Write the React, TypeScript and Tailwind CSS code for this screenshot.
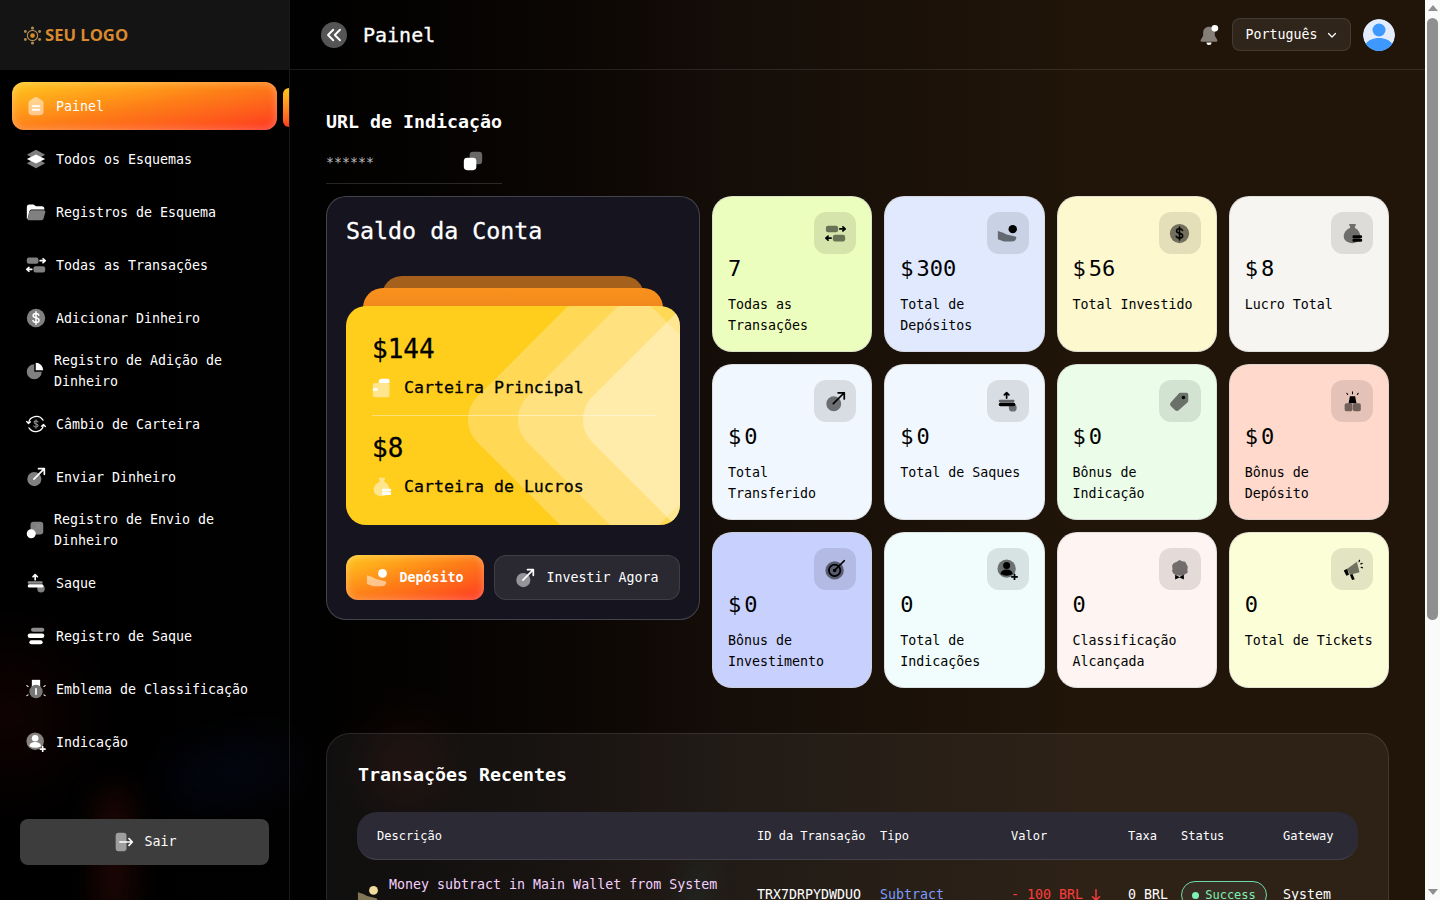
import React from 'react';

type IconProps = { className?: string };

const Svg: React.FC<React.PropsWithChildren<IconProps>> = ({ className, children }) => (
  <svg viewBox="0 0 24 24" fill="currentColor" className={className}>
    {children}
  </svg>
);

const line = { stroke: 'currentColor', strokeWidth: 2, strokeLinecap: 'round' as const, strokeLinejoin: 'round' as const, fill: 'none' };

const HomeIcon = (p: IconProps) => (
  <Svg {...p}>
    <path opacity=".5" d="M10.4 1.6a3 3 0 0 1 3.2 0l6 4A3 3 0 0 1 21 8v11a4 4 0 0 1-4 4H7a4 4 0 0 1-4-4V8a3 3 0 0 1 1.4-2.4z" />
    <rect x="7" y="11" width="10" height="2.2" rx="1" />
    <rect x="7" y="15.4" width="10" height="2.2" rx="1" />
  </Svg>
);
const LayersIcon = (p: IconProps) => (
  <Svg {...p}>
    <path opacity=".5" d="M12 1l11 6-11 6L1 7z" />
    <path opacity=".5" d="M12 11l11 6-11 6L1 17z" />
    <path d="M12 6.5l11 5.5-11 5.5L1 12z" />
  </Svg>
);
const FolderIcon = (p: IconProps) => (
  <Svg {...p}>
    <path d="M1 6a3 3 0 0 1 3-3h5l3 2h7a3 3 0 0 1 3 3v1H7a3 3 0 0 0-3 2l-2 9H1z" />
    <path opacity=".5" d="M7 10h14a2 2 0 0 1 2 3l-2 7a3 3 0 0 1-3 2H3a1 1 0 0 1-1-1l2-9a3 3 0 0 1 3-2z" />
  </Svg>
);
const TransferIcon = (p: IconProps) => (
  <Svg {...p}>
    <rect opacity=".5" x="1" y="3" width="14" height="7.5" rx="2.5" />
    <rect opacity=".5" x="9" y="13.5" width="14" height="7.5" rx="2.5" />
    <path {...line} d="M17 6.8h6M20.5 4.5l2.5 2.3-2.5 2.3M7 17.2H1M3.5 15L1 17.2l2.5 2.3" />
  </Svg>
);
const DollarStroke = () => (
  <path {...line} strokeWidth={1.8} d="M15.5 8.6c-.5-1.3-1.8-2-3.5-2-2 0-3.4 1-3.4 2.6 0 3.4 7 1.8 7 5.4 0 1.7-1.5 2.7-3.6 2.7-1.9 0-3.3-.8-3.8-2.2M12 4.6v14.8" />
);
const CoinIcon = (p: IconProps) => (
  <Svg {...p}>
    <circle opacity=".5" cx="12" cy="12" r="11" />
    <DollarStroke />
  </Svg>
);
const PieIcon = (p: IconProps) => (
  <Svg {...p}>
    <path opacity=".5" d="M11 3a10 10 0 1 0 10 10H11z" />
    <path d="M13 1a10 10 0 0 1 10 10H13z" />
  </Svg>
);
const ExchangeIcon = (p: IconProps) => (
  <Svg {...p}>
    <path {...line} strokeWidth={1.5} d="M3 11a9.500 9.500 0 0 1 17.400-3.600M21 13a9.500 9.500 0 0 1-17.400 3.600M.8 9L3 11.400 5.400 9.400M23.200 15L21 12.600 18.600 14.600" />
    <g opacity=".55" transform="translate(3.6 3.6) scale(.7)">
      <DollarStroke />
    </g>
  </Svg>
);
const SendIcon = (p: IconProps) => (
  <Svg {...p}>
    <ellipse opacity=".5" cx="10" cy="14.5" rx="8.5" ry="8.5" />
    <path {...line} d="M9.5 14.5L22 2M15 2h7v7" />
  </Svg>
);
const SendLogIcon = (p: IconProps) => (
  <Svg {...p}>
    <rect opacity=".5" x="6" y="1" width="17" height="17" rx="4" />
    <circle cx="7" cy="17" r="6" />
    <path {...line} stroke="#888" strokeWidth={1.6} d="M11 12l7-7M13 5h5v5" />
  </Svg>
);
const WithdrawIcon = (p: IconProps) => (
  <Svg {...p}>
    <path {...line} d="M11 8V2M8.400 4.500L11 2l2.600 2.500" />
    <rect x="2" y="10" width="18" height="3" rx="1.5" opacity=".55" />
    <rect x="2" y="13.5" width="19" height="4" rx="2" />
    <circle opacity=".5" cx="18" cy="19" r="4.5" />
  </Svg>
);
const WithdrawLogIcon = (p: IconProps) => (
  <Svg {...p}>
    <rect opacity=".55" x="6" y="2" width="16" height="5" rx="2.5" />
    <rect x="2" y="9" width="20" height="5.5" rx="2.7" />
    <rect x="4" y="17" width="16" height="5" rx="2.5" />
  </Svg>
);
const RankIcon = (p: IconProps) => (
  <Svg {...p}>
    <path d="M7 1h10v10H7z" />
    <circle cx="12" cy="15" r="8" fill="#777" />
    <rect x="11" y="11" width="2" height="8" fill="#fff" />
    <path {...line} strokeWidth={1.3} d="M1 8l1.500 1M23 8l-1.500 1M1 20l1.500-1M23 20l-1.500-1" />
  </Svg>
);
const ReferralIcon = (p: IconProps) => (
  <Svg {...p}>
    <circle opacity=".5" cx="11" cy="11" r="10.5" />
    <circle cx="11" cy="7.5" r="4" />
    <path d="M4 17a7 5 0 0 1 14 0 14 14 0 0 1-14 0z" fill="currentColor" />
    <path {...line} d="M20 17.500v6M17 20.500h6" />
  </Svg>
);
const LogoutIcon = (p: IconProps) => (
  <Svg {...p}>
    <rect opacity=".5" x="2" y="1" width="13" height="22" rx="3.5" />
    <path {...line} d="M7 12h15M18 8l4 4-4 4" />
  </Svg>
);
const HandIcon = (p: IconProps) => (
  <Svg {...p}>
    <path opacity=".5" d="M1 9l6 2 4 2 10 2.500c1.500.4 1.600 3-.5 4.500-1 .7-2 1-3.500 1H8l-7-2.500z" />
    <circle cx="18" cy="7" r="4.800" />
  </Svg>
);
const CopyIcon = (p: IconProps) => (
  <Svg {...p}>
    <rect opacity=".4" x="8" y="1" width="15" height="15" rx="4" />
    <rect x="1" y="8" width="15" height="15" rx="4" />
  </Svg>
);
const WalletIcon = (p: IconProps) => (
  <Svg {...p}>
    <path d="M8 5a4 4 0 0 1 4-4h7a2 2 0 0 1 2 2v3H8z" />
    <path opacity=".5" d="M1 9a3 3 0 0 1 3-3h15a2 2 0 0 1 2 2v13a2 2 0 0 1-2 2H4a3 3 0 0 1-3-3z" />
    <rect x="1" y="12" width="6" height="3.600" rx="1.800" />
  </Svg>
);
const BagIcon = (p: IconProps) => (
  <Svg {...p}>
    <path opacity=".5" d="M8 1h8l-1.500 4.500c4 2 6.500 6 6.500 10S17 23 12 23c-5.600 0-10-3-10-7.500s3-8 7.500-10z" />
    <rect x="12" y="14" width="11" height="3.500" rx="1.500" />
    <rect x="12" y="18" width="11" height="3.500" rx="1.500" />
  </Svg>
);
const TagIcon = (p: IconProps) => (
  <Svg {...p}>
    <path opacity=".5" d="M13 2h7a2 2 0 0 1 2 2v7a3 3 0 0 1-1 2L11 22a3 3 0 0 1-4 0l-5-5a3 3 0 0 1 0-4l9-10a3 3 0 0 1 2-1z" />
    <circle cx="16.500" cy="7.500" r="2" />
  </Svg>
);
const GiftIcon = (p: IconProps) => (
  <Svg {...p}>
    <path d="M9 6h6l1.500 8h-9z" />
    <rect opacity=".5" x="3" y="14" width="9" height="9" rx="2" />
    <rect opacity=".5" x="12.500" y="14" width="9" height="9" rx="2" />
    <path {...line} strokeWidth={1.2} d="M12 1v2M5.500 2.500l1 1.500M18.500 2.500l-1 1.500" />
  </Svg>
);
const TargetIcon = (p: IconProps) => (
  <Svg {...p}>
    <circle opacity=".5" cx="11" cy="13" r="10.500" />
    <circle cx="11" cy="13" r="6.500" fill="none" stroke="currentColor" strokeWidth="2" />
    <circle cx="11" cy="13" r="2" />
    <path {...line} d="M11 13L22 2" />
  </Svg>
);
const MedalIcon = (p: IconProps) => (
  <Svg {...p}>
    <path opacity=".5" d="M12 1l3 1.500 3.500.5 1.500 3 1.500 3-.5 3.500 .5 3-3 2-3 1.500L12 19l-3.500-.5-3-1.500-2-3 .5-3-.5-3.500 2-3 3-1z" />
    <path d="M7 18l5 2.500L17 18v5.500l-5-2.500-5 2.500z" />
  </Svg>
);
const MegaphoneIcon = (p: IconProps) => (
  <Svg {...p}>
    <path opacity=".5" d="M6 11L17 3l3 12-11 3z" />
    <path d="M2 13l4-2 2 7-3 1zM9 18l3-1 2.500 6-3 1z" />
    <path {...line} strokeWidth={1.4} d="M20 1.500l-.5 1.500M23 5l-1.500.5M23.500 10l-1.500-.5" />
  </Svg>
);

const LogoMark = () => (
  <svg viewBox="0 0 24 24" className="h-[19px] w-[19px] text-[#b08a55]" fill="currentColor">
    <circle cx="12" cy="12" r="6.500" fill="none" stroke="currentColor" strokeWidth="1.500" />
    <circle cx="12" cy="12" r="3" fill="#d98a24" />
    <circle cx="12" cy="2.500" r="2" />
    <circle cx="12" cy="21.500" r="2" />
    <circle cx="3" cy="7" r="1.800" />
    <circle cx="21" cy="7" r="1.800" />
    <circle cx="3" cy="17" r="1.800" />
    <circle cx="21" cy="17" r="1.800" />
  </svg>
);

const menu = [
  { label: 'Painel', icon: HomeIcon, active: true },
  { label: 'Todos os Esquemas', icon: LayersIcon },
  { label: 'Registros de Esquema', icon: FolderIcon },
  { label: 'Todas as Transações', icon: TransferIcon },
  { label: 'Adicionar Dinheiro', icon: CoinIcon },
  { label: 'Registro de Adição de Dinheiro', icon: PieIcon, tight: true },
  { label: 'Câmbio de Carteira', icon: ExchangeIcon },
  { label: 'Enviar Dinheiro', icon: SendIcon },
  { label: 'Registro de Envio de Dinheiro', icon: SendLogIcon, tight: true },
  { label: 'Saque', icon: WithdrawIcon },
  { label: 'Registro de Saque', icon: WithdrawLogIcon },
  { label: 'Emblema de Classificação', icon: RankIcon },
  { label: 'Indicação', icon: ReferralIcon },
];

const stats = [
  { value: '7', label: 'Todas as Transações', bg: 'bg-[#ecfebe]', icon: TransferIcon },
  { value: '300', money: true, label: 'Total de Depósitos', bg: 'bg-[#e0e9fe]', icon: HandIcon },
  { value: '56', money: true, label: 'Total Investido', bg: 'bg-[#fef8cf]', icon: CoinIcon },
  { value: '8', money: true, label: 'Lucro Total', bg: 'bg-[#f6f5f2]', icon: BagIcon },
  { value: '0', money: true, label: 'Total Transferido', bg: 'bg-[#f1f7fe]', icon: SendIcon },
  { value: '0', money: true, label: 'Total de Saques', bg: 'bg-[#f1f7fe]', icon: WithdrawIcon },
  { value: '0', money: true, label: 'Bônus de Indicação', bg: 'bg-[#ebfde9]', icon: TagIcon },
  { value: '0', money: true, label: 'Bônus de Depósito', bg: 'bg-[#fed9cc]', icon: GiftIcon },
  { value: '0', money: true, label: 'Bônus de Investimento', bg: 'bg-[#c8d0fd]', icon: TargetIcon },
  { value: '0', label: 'Total de Indicações', bg: 'bg-[#f0fdfc]', icon: ReferralIcon },
  { value: '0', label: 'Classificação Alcançada', bg: 'bg-[#fef4f1]', icon: MedalIcon },
  { value: '0', label: 'Total de Tickets', bg: 'bg-[#fcfed8]', icon: MegaphoneIcon },
];

const rows = [
  { desc: 'Money subtract in Main Wallet from System', date: 'Oct 12 2024 10:24', id: 'TRX7DRPYDWDUO', type: 'Subtract', amount: '- 100 BRL', up: false },
  { desc: 'Money add in Main Wallet from System', date: 'Oct 12 2024 10:22', id: 'TRX9KQPLXAZTE', type: 'Deposit', amount: '+ 200 BRL', up: true },
  { desc: 'Invested to Starter Plan', date: 'Oct 11 2024 18:02', id: 'TRX4MHVNBEWSA', type: 'Investment', amount: '- 56 BRL', up: false },
  { desc: 'Profit from Starter Plan', date: 'Oct 11 2024 09:41', id: 'TRX2PLCYUGROK', type: 'Interest', amount: '+ 8 BRL', up: true },
];

const columns = 'grid grid-cols-[380px_123px_131px_117px_53px_102px_1fr] pl-5';
const thick = '[-webkit-text-stroke:0.3px_currentColor]';

const StatCard = ({ item }: { item: (typeof stats)[number] }) => {
  const Icon = item.icon;
  return (
    <div className={`relative h-[156px] rounded-[20px] border border-[#cfcfcf]/60 ${item.bg} px-[15px] pt-[56px] text-black`}>
      <div className="absolute right-[15px] top-[15px] flex h-[42px] w-[42px] items-center justify-center rounded-xl bg-black/10">
        <Icon className="h-[21px] w-[21px]" />
      </div>
      <div className="h-8 text-[22px] leading-8">
        {item.money && <span className="mr-[3px]">$</span>}
        {item.value}
      </div>
      <div className="mt-[9px] text-[13.3px] leading-[21px]">{item.label}</div>
    </div>
  );
};

// the browser hides its own scrollbar in the screenshot, so the rail is drawn
const ScrollRail = () => (
  <div className="flex h-screen w-[15px] shrink-0 flex-col items-center bg-[#fafafa]">
    <div className="mt-[5px] h-0 w-0 border-x-[5px] border-b-[6px] border-x-transparent border-b-[#8f8f8f]" />
    <div className="mt-[7px] h-[602px] w-[11px] rounded-full bg-[#8f8f8f]" />
    <div className="mb-[5px] mt-auto h-0 w-0 border-x-[5px] border-t-[6px] border-x-transparent border-t-[#8f8f8f]" />
  </div>
);

export default function App() {
  return (
    <div className="relative isolate flex h-screen overflow-hidden bg-linear-to-r from-black via-[#140d08] via-50% to-[#211509] to-75% font-['DejaVu_Sans_Mono',monospace] text-white">
      {/* blurred background shapes */}
      <div className="pointer-events-none absolute inset-0 -z-10 overflow-hidden">
        <div className="absolute -left-10 top-[660px] h-[110px] w-[100px] rounded-full bg-[#5a0d0d]/25 blur-2xl" />
        <div className="absolute left-[100px] top-[790px] h-[130px] w-[28px] rounded-full bg-[#7a1a10]/30 blur-lg" />
        <div className="absolute left-[170px] top-[755px] h-[35px] w-[120px] -rotate-12 rounded-full bg-[#0b1748]/35 blur-xl" />
        <div className="absolute left-[370px] top-[730px] h-[70px] w-[70px] -rotate-45 rounded-full bg-[#6a1a10]/20 blur-xl" />
        <div className="absolute left-[690px] top-[860px] h-[60px] w-[14px] rotate-12 rounded-full bg-[#1c4a48]/30 blur-md" />
      </div>

      <aside className="flex h-screen w-[290px] shrink-0 flex-col border-r border-white/10">
        <div className="flex h-[70px] shrink-0 items-center gap-[3px] bg-[#141414] pl-[23px]">
          <LogoMark />
          <span className="font-['Open_Sans',sans-serif] text-[16.6px] font-bold text-[#d98a2e]">SEU LOGO</span>
        </div>
        <nav className="flex flex-col gap-[5px] px-3 pt-3">
          {menu.map((item) => {
            const Icon = item.icon;
            return (
              <a
                key={item.label}
                className={`relative flex h-12 items-center gap-[10px] rounded-xl pl-[14px] text-[13.3px] leading-[21px] ${
                  item.active
                    ? 'bg-linear-to-br from-[#ffc81e] via-[#fd7e17] to-[#fd2f1e] shadow-[inset_0_0_8px_rgba(255,255,255,0.35)]'
                    : ''
                }`}
              >
                <Icon className={`shrink-0 ${item.tight ? 'h-[18px] w-[18px]' : 'h-5 w-5'}`} />
                <span className={item.tight ? 'w-[190px]' : ''}>{item.label}</span>
                {item.active && (
                  <span className="absolute left-[271px] top-[6px] h-[39px] w-1.5 rounded-l-md bg-linear-to-b from-[#ffc81e] to-[#fd3a1e]" />
                )}
              </a>
            );
          })}
        </nav>
        <button className="mx-5 mb-[35px] mt-auto flex h-[46px] items-center justify-center gap-[10px] rounded-lg bg-[#3d3d3d] pl-[2px] text-[13.3px]">
          <LogoutIcon className="h-5 w-5" />
          Sair
        </button>
      </aside>

      <main className="h-screen min-w-0 flex-1 overflow-y-auto">
        <header className="flex h-[70px] items-center border-b border-white/10 pl-[31px] pr-[30px]">
          <button className="flex h-[26px] w-[26px] items-center justify-center rounded-full bg-[#555]">
            <svg viewBox="0 0 24 24" className="h-[18px] w-[18px]" fill="none" stroke="currentColor" strokeWidth="2.500" strokeLinecap="round" strokeLinejoin="round">
              <path d="M11 5l-7 7 7 7M20 5l-7 7 7 7" />
            </svg>
          </button>
          <h1 className={`ml-4 text-[20px] ${thick}`}>Painel</h1>
          <div className="ml-auto flex items-center">
            <svg viewBox="0 0 24 24" className="h-[20px] w-[20px] text-white" fill="currentColor">
              <path opacity=".45" d="M12 2c4 0 7 3 7 7v4l3 5c.3 1-.3 2-1 2H3c-.8 0-1.300-1-1-2l3-5V9c0-4 3-7 7-7z" />
              <path d="M9 21h6a3 3 0 0 1-6 0z" />
              <circle cx="19" cy="4" r="4" />
            </svg>
            <button className="ml-[13px] flex h-[33px] w-[119px] items-center justify-center gap-2 rounded-lg border border-white/10 bg-white/[0.07] text-[13.3px]">
              Português
              <svg viewBox="0 0 24 24" className="h-3 w-3" fill="none" stroke="currentColor" strokeWidth="2.500" strokeLinecap="round" strokeLinejoin="round">
                <path d="M5 9l7 7 7-7" />
              </svg>
            </button>
            <svg viewBox="0 0 32 32" className="ml-3 h-8 w-8 rounded-full">
              <circle cx="16" cy="16" r="16" fill="#e3ecfd" />
              <circle cx="16" cy="11" r="6.500" fill="#3e98fd" />
              <path d="M2 26c3-5 8-7 14-7s11 2 14 7a16 16 0 0 1-28 0z" fill="#3e98fd" />
            </svg>
          </div>
        </header>

        <div className="px-9 pb-9">
          <h2 className="mt-[40px] text-[18.3px] font-bold leading-6">URL de Indicação</h2>
          <div className="mt-[13px] flex h-[37px] w-[176px] items-start justify-between border-b border-white/15 pr-[19px] pt-[4px] text-[13.3px] text-[#bbb]">
            <span className="mt-[2px] leading-5">******</span>
            <CopyIcon className="h-5 w-5 text-white" />
          </div>

          <div className="mt-3 grid grid-cols-[374px_1fr] gap-3">
            <section className="h-[424px] rounded-[20px] border border-white/20 bg-[#15141f] px-[19px] pt-4">
              <h3 className={`text-[23.3px] leading-9 ${thick}`}>Saldo da Conta</h3>
              <div className="relative mt-[27px]">
                <div className="mx-[36px] h-8 rounded-t-[20px] bg-[#a5611b]" />
                <div className="mx-[17px] -mt-5 h-8 rounded-t-[20px] bg-linear-to-b from-[#fb921e] to-[#e8831a]" />
                <div className="relative -mt-[14px] h-[219px] overflow-hidden rounded-[20px] bg-[#ffcd1c] pl-[26px] pr-[25px] text-black">
                  <div className="absolute left-[154px] top-1 h-[219px] w-[219px] rotate-45 rounded-[32px] bg-white/25" />
                  <div className="absolute left-[204px] top-1 h-[219px] w-[219px] rotate-45 rounded-[32px] bg-white/25" />
                  <div className="absolute left-[269px] top-1 h-[219px] w-[219px] rotate-45 rounded-[32px] bg-white/35" />
                  <div className={`relative ${thick}`}>
                    <div className="pt-[25px] text-[26px] leading-9">$144</div>
                    <div className="mt-[3px] flex h-[36px] items-center gap-3 text-[16.6px]">
                      <WalletIcon className="h-5 w-5 text-white" />
                      Carteira Principal
                    </div>
                    <div className="mt-[9px] border-t border-white/40" />
                    <div className="pt-[14px] text-[26px] leading-9">$8</div>
                    <div className="mt-[3px] flex h-[36px] items-center gap-3 text-[16.6px]">
                      <BagIcon className="h-5 w-5 text-white" />
                      Carteira de Lucros
                    </div>
                  </div>
                </div>
              </div>
              <div className="mt-[30px] flex gap-[10px]">
                <button className="flex h-[45px] w-[138px] items-center justify-center gap-[11px] rounded-xl bg-linear-to-br from-[#ffc81e] via-[#fd7e17] to-[#fd2f1e] text-[13.3px] font-bold shadow-[inset_0_0_8px_rgba(255,255,255,0.35)]">
                  <HandIcon className="h-[22px] w-[22px]" />
                  Depósito
                </button>
                <button className="flex h-[45px] flex-1 items-center justify-center gap-[11px] rounded-xl border border-white/10 bg-[#2a2932] text-[13.3px]">
                  <SendIcon className="h-5 w-5" />
                  Investir Agora
                </button>
              </div>
            </section>

            <div className="grid h-fit grid-cols-4 gap-3">
              {stats.map((s) => (
                <StatCard key={s.label} item={s} />
              ))}
            </div>
          </div>

          <section className="mt-[45px] rounded-3xl border border-white/10 bg-white/[0.06] px-[30px] pb-6 pt-[27px]">
            <h3 className="ml-px text-[18.3px] font-bold leading-7">Transações Recentes</h3>
            <div className={`${columns} mt-[23px] h-12 items-center rounded-[20px] border-b border-white/10 bg-[#2c2a35] text-[12px]`}>
              <span>Descrição</span>
              <span>ID da Transação</span>
              <span>Tipo</span>
              <span>Valor</span>
              <span>Taxa</span>
              <span>Status</span>
              <span>Gateway</span>
            </div>
            <div className="mt-[6px]">
              {rows.map((r) => (
                <div key={r.id} className={`${columns} h-[58px] items-center text-[13.3px]`}>
                  <div className="-ml-[20px] flex items-center gap-[10px]">
                    <HandIcon className={`h-[22px] w-[22px] shrink-0 ${r.up ? 'text-[#9fe8b0]' : 'text-[#f2dc9b]'}`} />
                    <div className="leading-[21px]">
                      <div className="whitespace-nowrap text-[#f5d0fe]">{r.desc}</div>
                      <div className="text-[12px] text-white/60">{r.date}</div>
                    </div>
                  </div>
                  <span>{r.id}</span>
                  <span className="text-[#7c9cff]">{r.type}</span>
                  <span className={`flex items-center gap-[6px] ${r.up ? 'text-[#5ee79a]' : 'text-[#ff3b3b]'}`}>
                    {r.amount}
                    <svg viewBox="0 0 24 24" className={`h-[14px] w-[14px] ${r.up ? 'rotate-180' : ''}`} fill="none" stroke="currentColor" strokeWidth="2.500" strokeLinecap="round" strokeLinejoin="round">
                      <path d="M12 3v18M6 15l6 6 6-6" />
                    </svg>
                  </span>
                  <span className="whitespace-nowrap">0 BRL</span>
                  <span className="flex h-7 w-[86px] items-center justify-center gap-[6px] rounded-full border border-[#6fd8a5] bg-white/5 text-[12px] text-[#7ff0b4]">
                    <span className="h-[7px] w-[7px] rounded-full bg-[#7ff0b4]" />
                    Success
                  </span>
                  <span>System</span>
                </div>
              ))}
            </div>
          </section>
        </div>
      </main>

      <ScrollRail />
    </div>
  );
}
